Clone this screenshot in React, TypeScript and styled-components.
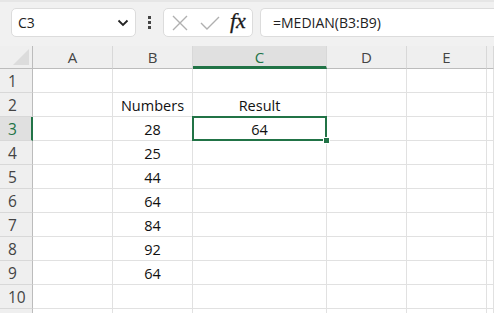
import React from "react";
import styled, { createGlobalStyle } from "styled-components";

const Global = createGlobalStyle`
  html, body { margin: 0; padding: 0; background: #ffffff; overflow: hidden; }
  body { font-family: "Open Sans", "Noto Sans", "Liberation Sans", sans-serif; }
  * { box-sizing: border-box; }
`;

const GREEN = "#217346";

const Page = styled.div`
  width: 494px;
  height: 313px;
  display: flex;
  flex-direction: column;
  overflow: hidden;
`;

const Toolbar = styled.div`
  height: 46px;
  flex: none;
  background: #f1f1f1;
  border-top: 2px solid #e6e6e6;
  display: flex;
  align-items: flex-start;
  padding: 6px 0 0 11px;
`;

const NameBox = styled.div`
  width: 125px;
  height: 29px;
  background: #ffffff;
  border: 1px solid #dcdcdc;
  border-radius: 5px;
  display: flex;
  align-items: center;
  justify-content: space-between;
  padding: 0 6px 0 6px;
  font-size: 14px;
  color: #222;
`;

const Dots = styled.div`
  width: 27px;
  height: 29px;
  display: flex;
  flex-direction: column;
  align-items: center;
  justify-content: center;
  gap: 2px;
`;

const Dot = styled.span`
  width: 3px;
  height: 3px;
  background: #444;
`;

const FxBox = styled.div`
  width: 90px;
  height: 29px;
  background: #ffffff;
  border: 1px solid #dcdcdc;
  border-radius: 5px;
  display: flex;
  align-items: center;
  padding-left: 7px;
  gap: 11px;
`;

const FxText = styled.span`
  font-family: "Liberation Serif", "DejaVu Serif", serif;
  font-style: italic;
  font-weight: 400;
  font-size: 22px;
  color: #1a1a1a;
  margin-left: -1px;
  line-height: 1;
  padding-bottom: 3px;
  -webkit-text-stroke: 0.3px #1a1a1a;
`;

const Formula = styled.div`
  flex: 1;
  height: 29px;
  margin-left: 7px;
  background: #ffffff;
  border: 1px solid #dcdcdc;
  border-right: none;
  border-radius: 5px 0 0 5px;
  display: flex;
  align-items: center;
  padding-left: 12px;
  font-size: 14px;
  color: #222;
`;

const Grid = styled.div`
  display: grid;
  grid-template-columns: 33px 80px 80px 134px 80px 80px 7px;
  grid-auto-rows: 24px;
  grid-template-rows: 23px;
`;

const Corner = styled.div`
  background: #efefef;
  border-bottom: 1px solid #bcbcbc;
  border-right: 1px solid #bcbcbc;
  position: relative;
  overflow: hidden;
`;

const CornerTri = styled.div`
  position: absolute;
  right: 3px;
  bottom: 3px;
  width: 0;
  height: 0;
  border-left: 16px solid transparent;
  border-bottom: 16px solid #dcdcdc;
`;

const ColHead = styled.div<{ $sel?: boolean }>`
  background: ${(p) => (p.$sel ? "#e0e0e0" : "#efefef")};
  border-bottom: ${(p) => (p.$sel ? `3px solid ${GREEN}` : "1px solid #bcbcbc")};
  border-right: 1px solid #d8d8d8;
  display: flex;
  align-items: center;
  justify-content: center;
  padding-top: ${(p) => (p.$sel ? "2px" : "0")};
  font-size: 15px;
  color: ${(p) => (p.$sel ? GREEN : "#444")};
`;

const RowHead = styled.div<{ $sel?: boolean }>`
  background: ${(p) => (p.$sel ? "#e0e0e0" : "#efefef")};
  border-right: ${(p) => (p.$sel ? `2px solid ${GREEN}` : "1px solid #bcbcbc")};
  border-bottom: 1px solid #d8d8d8;
  display: flex;
  align-items: center;
  justify-content: flex-start;
  padding-left: 8px;
  font-size: 15.5px;
  color: ${(p) => (p.$sel ? GREEN : "#444")};
`;

const Cell = styled.div`
  border-right: 1px solid #e1e1e1;
  border-bottom: 1px solid #e1e1e1;
  display: flex;
  align-items: center;
  justify-content: center;
  font-family: "Open Sans", "Liberation Sans", sans-serif;
  font-size: 14.5px;
  color: #111;
  position: relative;
  padding-top: 1px;
`;

const ActiveFrame = styled.div`
  position: absolute;
  left: -1px;
  top: -1px;
  right: -1px;
  bottom: -1px;
  border: 2px solid ${GREEN};
  pointer-events: none;
  z-index: 3;
`;

const FillHandle = styled.div`
  position: absolute;
  right: -5px;
  bottom: -5px;
  width: 7px;
  height: 7px;
  background: ${GREEN};
  border: 1px solid #ffffff;
`;

const XIcon = () => (
  <svg width="18" height="18" viewBox="0 0 18 18">
    <path d="M2 2 L16 16 M16 2 L2 16" stroke="#b0b0b0" strokeWidth="1.4" fill="none" />
  </svg>
);

const CheckIcon = () => (
  <svg width="20" height="16" viewBox="0 0 20 16">
    <path d="M1 8 L7 14 L19 2" stroke="#b0b0b0" strokeWidth="1.4" fill="none" />
  </svg>
);

const Chevron = () => (
  <svg width="12" height="8" viewBox="0 0 12 8">
    <path d="M1.5 1.5 L6 6 L10.5 1.5" stroke="#222" strokeWidth="1.8" fill="none" />
  </svg>
);

const cols = ["A", "B", "C", "D", "E", ""];
const data: Record<number, { b?: string; c?: string }> = {
  2: { b: "Numbers", c: "Result" },
  3: { b: "28", c: "64" },
  4: { b: "25" },
  5: { b: "44" },
  6: { b: "64" },
  7: { b: "84" },
  8: { b: "92" },
  9: { b: "64" },
};

export default function App() {
  const rows = Array.from({ length: 11 }, (_, i) => i + 1);
  return (
    <Page>
      <Global />
      <Toolbar>
        <NameBox>
          <span>C3</span>
          <Chevron />
        </NameBox>
        <Dots>
          <Dot />
          <Dot />
          <Dot />
        </Dots>
        <FxBox>
          <XIcon />
          <CheckIcon />
          <FxText>fx</FxText>
        </FxBox>
        <Formula>=MEDIAN(B3:B9)</Formula>
      </Toolbar>
      <Grid>
        <Corner>
          <CornerTri />
        </Corner>
        {cols.map((c, i) => (
          <ColHead key={i} $sel={c === "C"}>
            {c}
          </ColHead>
        ))}
        {rows.map((r) => (
          <React.Fragment key={r}>
            <RowHead $sel={r === 3}>{r <= 10 ? r : ""}</RowHead>
            <Cell />
            <Cell>{data[r]?.b}</Cell>
            <Cell>
              {data[r]?.c}
              {r === 3 && (
                <ActiveFrame>
                  <FillHandle />
                </ActiveFrame>
              )}
            </Cell>
            <Cell />
            <Cell />
            <Cell />
          </React.Fragment>
        ))}
      </Grid>
    </Page>
  );
}
